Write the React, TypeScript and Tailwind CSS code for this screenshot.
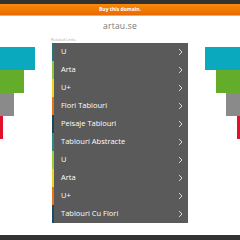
const links = [
  { label: "U", color: "#1f7680" },
  { label: "Arta", color: "#8cc63f" },
  { label: "U+", color: "#f2d21e" },
  { label: "Flori Tablouri", color: "#e8731c" },
  { label: "Peisaje Tablouri", color: "#124a5c" },
  { label: "Tablouri Abstracte", color: "#2e8b7a" },
  { label: "U", color: "#9ccc3c" },
  { label: "Arta", color: "#f0d020" },
  { label: "U+", color: "#e8731c" },
  { label: "Tablouri Cu Flori", color: "#1a4a6a" },
]

const Chevron = () => (
  <svg width="5" height="8" viewBox="0 0 5 8" fill="none">
    <path d="M1 1l3 3-3 3" stroke="#d8d8d8" strokeWidth="1" />
  </svg>
)

const App = () => {
  return (
    <div className="w-[240px] h-[240px] flex flex-col bg-white overflow-hidden" style={{ fontFamily: '"Open Sans", sans-serif' }}>
      <div className="h-[4px] bg-[#333]"></div>
      <div className="h-[11px] bg-gradient-to-b from-[#f98a0a] to-[#ea6a00] flex items-center justify-center text-white text-[5px] font-bold">
        Buy this domain.
      </div>
      <div className="h-[1px] bg-[#f6a868]"></div>

      <div className="h-[20px] flex items-center justify-center text-[8.5px] text-[#777] tracking-[0.2px]">artau.se</div>
      <div className="h-[7px] pl-[51px] text-[4px] leading-[7px] text-[#aaa]">Related Links</div>

      <div className="flex flex-1">
        <div className="w-[52px] flex flex-col items-start pt-[4px]">
          <div className="h-[23px] w-[35px] bg-[#0aa9bd]"></div>
          <div className="h-[23px] w-[24px] bg-[#64ad2a]"></div>
          <div className="h-[23px] w-[14px] bg-[#8a8a8a]"></div>
          <div className="h-[23px] w-[3px] bg-[#e0102e]"></div>
        </div>

        <div className="w-[136px] self-start bg-[#5a5a5a]">
          {links.map((link, i) => (
            <div key={i} className="h-[18px] flex items-center border-l-2 pl-[7px] pr-[5px]" style={{ borderColor: link.color }}>
              <span className="flex-1 text-white text-[7.5px] font-medium">{link.label}</span>
              <Chevron />
            </div>
          ))}
        </div>

        <div className="w-[52px] flex flex-col items-end pt-[4px]">
          <div className="h-[23px] w-[35px] bg-[#0aa9bd]"></div>
          <div className="h-[23px] w-[24px] bg-[#64ad2a]"></div>
          <div className="h-[23px] w-[14px] bg-[#8a8a8a]"></div>
          <div className="h-[23px] w-[3px] bg-[#e0102e]"></div>
        </div>
      </div>

      <div className="h-[5px] bg-[#333]"></div>
    </div>
  )
}

export default App
